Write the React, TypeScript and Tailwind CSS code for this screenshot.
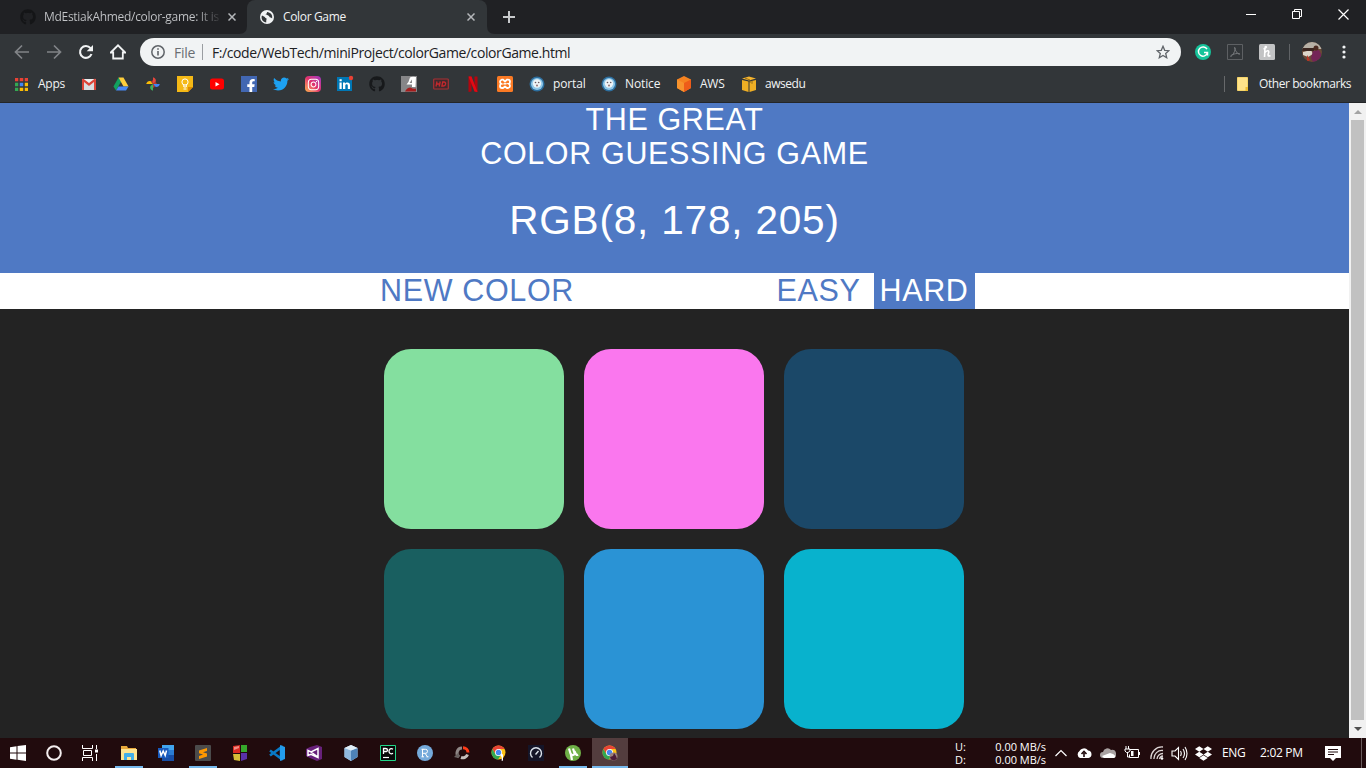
import React from "react";
import { FaGithub, FaTwitter, FaInstagram, FaDropbox, FaFacebookF } from "react-icons/fa";

type P = { children: React.ReactNode; size?: number; vb?: string; className?: string };
const Svg = ({ children, size = 16, vb = "0 0 16 16", className = "" }: P) => (
  <svg width={size} height={size} viewBox={vb} fill="none" className={"shrink-0 " + className}>
    {children}
  </svg>
);

const Close = () => (
  <Svg size={8} vb="0 0 8 8">
    <path d="M0.5 0.5l7 7M7.5 0.5l-7 7" stroke="#b4b7ba" strokeWidth="1.5" />
  </Svg>
);

const Globe = () => (
  <Svg size={14} vb="0 0 14 14">
    <circle cx="7" cy="7" r="7" fill="#f1f3f4" />
    <path d="M2 5.5c1.500 1 2.500 1 3.500 2.500 1.200.2 1.500 1 .8 2L6.200 12.500C3 12 1.300 9.500 1.600 6.500zM7 2c.2 1.500-.9 1.500-1.400 2.500.8.9 2.200.2 3 1.300 1 .9.600 1.700 2 1.600.9.100 1.300.8 1.500 1.100C13 5 10.500 2.300 7 2z" fill="#323639" />
  </Svg>
);

const Chrome = ({ user = false }: { user?: boolean }) => (
  <Svg>
    <circle cx="7.500" cy="7.500" r="7" fill="#fbc116" />
    <path d="M1.400 4A7 7 0 0 1 13.600 4H7.500L4.500 9z" fill="#e84436" />
    <path d="M1.400 4A7 7 0 0 0 7 14.500L10.500 9H4.300z" fill="#31a852" />
    <circle cx="7.500" cy="7.500" r="3.500" fill="#fff" />
    <circle cx="7.500" cy="7.500" r="2.700" fill="#4688f1" />
    {user ? (
      <>
        <circle cx="11.500" cy="11.500" r="4" fill="#98817c" />
        <path d="M8 12l3-1 1-3 2 3 1 3-3 1.500-3-1z" fill="#4b1c39" />
      </>
    ) : (
      <path d="M10 8.500l2 1v6l-1.300.5v-4l-1-1z" fill="#fff" />
    )}
  </Svg>
);

const Seal = () => (
  <Svg>
    <circle cx="8" cy="8" r="7.500" fill="#2d6f9f" />
    <circle cx="8" cy="8" r="6" fill="#8fc7e8" />
    <circle cx="8" cy="7.500" r="4.200" fill="#eef4f7" />
    <circle cx="6.500" cy="6.500" r=".8" fill="#6a5a60" />
    <circle cx="9.700" cy="6.500" r=".8" fill="#6a5a60" />
    <circle cx="8" cy="9.500" r=".9" fill="#8b6464" />
  </Svg>
);

const Gmail = () => (
  <Svg>
    <path d="M1 3h14v11H1z" fill="#eceff1" />
    <path d="M3 14V6l5 4 5-4v8z" fill="#d9dde0" />
    <path d="M1 3.500v10.500h2V6l5 4 5-4v8h2V3.500L14 2.500 8 7 2 2.500z" fill="#dc4438" />
  </Svg>
);
const Drive = () => (
  <Svg>
    <path d="M5.500 1.500L.5 10.500 3 14.500 8 5.800z" fill="#11a15f" />
    <path d="M5.500 1.500h5l5 9h-5z" fill="#fdcd3b" />
    <path d="M5.500 10.500h10L13 14.500H3z" fill="#4687f4" />
  </Svg>
);
const Photos = () => (
  <Svg>
    <path d="M8 8V1.200C10.500 2 11.500 4 10.500 6z" fill="#e8453c" />
    <path d="M8 8h6.800C14 10.500 12 11.500 10 10.500z" fill="#4285f4" />
    <path d="M8 8v6.800C5.500 14 4.500 12 5.500 10z" fill="#3eae5c" />
    <path d="M8 8H1.200C2 5.500 4 4.500 6 5.500z" fill="#fbbc05" />
    <path d="M8 8L6 5.500 8 4zM8 8l2.500-2L12 8zM8 8l2 2.500L8 12z" fill="#bd3a2d" />
  </Svg>
);
const Keep = () => (
  <Svg>
    <path d="M0 0h16v11l-5 5H0z" fill="#f5b916" />
    <path d="M11 16v-5h5z" fill="#e18b00" />
    <circle cx="8" cy="6" r="3.100" stroke="#fff" />
    <path d="M6.800 8.500v2.500h2.500V8.500M6.500 13h3" stroke="#fff" />
  </Svg>
);
const YouTube = () => (
  <Svg>
    <rect x="1" y="2.500" width="14" height="11" rx="2.500" fill="#f00" />
    <path d="M6.500 6v4.500l4-2.250z" fill="#fff" />
  </Svg>
);
const Facebook = () => (
  <span className="relative h-4 w-4 shrink-0 overflow-hidden bg-[#4267b2]">
    <FaFacebookF className="absolute -right-px -bottom-px text-white" size={14} />
  </span>
);
const Insta = () => (
  <span className="flex h-4 w-4 shrink-0 items-center justify-center rounded bg-linear-to-tr from-[#fcb045] via-[#e1306c] to-[#a02fc4]">
    <FaInstagram className="text-white" size={13} />
  </span>
);
const LinkedIn = () => (
  <Svg className="overflow-visible">
    <path d="M0 1h15v14H0z" fill="#0077b5" />
    <path d="M2.500 6.500h2.200V13H2.500zM2.500 3.300h2.200v2H2.500zM6 6.500h2v1c1-1.600 5-1.700 5 1.500v4h-2.200V9.500c0-1.800-2.500-1.600-2.500 0V13H6z" fill="#fff" />
    <circle cx="14" cy="2" r="2.200" fill="#e94235" />
  </Svg>
);
const ALogo = () => (
  <Svg>
    <path d="M0 0h16v16H0z" fill="#868688" />
    <path d="M9 1.500Q10 .5 15 1l-.5 10H11V8.500H5.500Q8 6 9 1.500z" fill="#fff" />
    <path d="M11 3.500L8.500 7H11z" fill="#868688" />
    <path d="M4 15.500Q6 11.500 9.500 11.500q3 2 5.500 1v3z" fill="#a51d1d" />
  </Svg>
);
const HD = () => (
  <Svg>
    <rect x=".7" y="3" width="14.600" height="10" rx=".8" stroke="#a93034" strokeWidth="1.200" fill="#40292c" />
    <path d="M4 5.500L3 10.500M7.200 5.500L6.200 10.500M3.500 8h3M9.700 6L8.900 10h1.500C13 10 13.500 6 11 6z" stroke="#c5282d" strokeWidth="1.300" />
  </Svg>
);
const Netflix = () => (
  <Svg>
    <path d="M3.500.5h3v15l-3 .5zM9.500.5h3V16l-3-.5z" fill="#b1060f" />
    <path d="M3.500.5h3l6 15.500-3-.5z" fill="#e50914" />
  </Svg>
);
const Xampp = () => (
  <Svg>
    <rect width="16" height="16" rx="1.500" fill="#fb7a24" />
    <path d="M5 3.700h1L8 5.500l2-1.800h1q2 0 2 2T11.800 7.800Q13 8.500 13 10t-2 2h-1L8 10.500 6 12H5q-2 0-2-2t1.200-2.200Q3 7 3 5.700t2-2z" stroke="#fff" strokeWidth="1.800" />
    <path d="M6.500 7.800h3" stroke="#fff" strokeWidth="1.500" />
  </Svg>
);
const Aws = () => (
  <Svg>
    <path d="M8 0l7 3.500v8.500L8 16l-7-4V3.500z" fill="#f58220" />
    <path d="M1 3.500L8 7v9l-7-4z" fill="#f7932d" />
    <path d="M8 7l7-3.500v8.500L8 16z" fill="#ee5c19" />
  </Svg>
);
const AwsEdu = () => (
  <Svg>
    <path d="M1 2.500L8 .5l7 2-7 2z" fill="#f7b52d" />
    <path d="M1 4l6.500 1.500V16L1 14zM15 4L8.500 5.500V16L15 14z" fill="#eeae24" />
    <path d="M4 2l5 2v3M11 4.800v3" stroke="#775c1c" strokeWidth=".8" />
  </Svg>
);

const AppsGrid = () => (
  <Svg size={13} vb="0 0 13 13">
    {["#e94235", "#e94235", "#e94235", "#34a853", "#4285f4", "#fbbc05", "#34a853", "#fbbc05", "#fbbc05"].map((c, i) => (
      <rect key={i} x={(i % 3) * 5 - 0.25} y={Math.floor(i / 3) * 5 - 0.25} width="3.500" height="3.500" fill={c} />
    ))}
  </Svg>
);

const marks = [Gmail, Drive, Photos, Keep, YouTube, Facebook];
const marks2 = [ALogo, HD, Netflix, Xampp];

function TabStrip() {
  return (
    <div className="flex h-[34px] bg-[#202124]">
      <div className="flex w-[247px] items-center pl-5">
        <FaGithub size={16} className="shrink-0 text-[#141517]" />
        <span className="ml-2 w-[177px] whitespace-nowrap bg-linear-to-r from-[#c3c5c8] from-86% to-[#2b2c2f] bg-clip-text text-[12px] tracking-[-0.3px] text-transparent">
          MdEstiakAhmed/color-game: It is
        </span>
        <span className="ml-[7px]"><Close /></span>
      </div>
      <div className="relative flex w-[240px] items-center rounded-t-lg bg-[#323639] pl-[13px]">
        <Svg size={8} vb="0 0 8 8" className="absolute bottom-0 -left-2"><path d="M0 8h8V0Q8 8 0 8z" fill="#323639" /></Svg>
        <Svg size={8} vb="0 0 8 8" className="absolute bottom-0 -right-2"><path d="M8 8H0V0Q0 8 8 8z" fill="#323639" /></Svg>
        <Globe />
        <span className="ml-[9px] w-[184px] text-[12px] tracking-[-0.35px] text-[#f1f3f4]">Color Game</span>
        <Close />
      </div>
      <div className="flex flex-1 items-center pl-4">
        <Svg size={12} vb="0 0 12 12"><path d="M6 0v12M0 6h12" stroke="#c8cacc" strokeWidth="2" /></Svg>
      </div>
      <div className="flex items-start gap-[35px] pt-[9px] pr-[17px]">
        <Svg size={11} vb="0 0 11 11"><path d="M0 5.500h10" stroke="#fff" /></Svg>
        <Svg size={11} vb="0 0 11 11"><path d="M.5 2.500h7v7h-7zM2.500 2V.5h7v7H8" stroke="#fff" /></Svg>
        <Svg size={11} vb="0 0 11 11"><path d="M.5 .5l10 10M10.500 .5l-10 10" stroke="#fff" strokeWidth="1.200" /></Svg>
      </div>
    </div>
  );
}

function Toolbar() {
  return (
    <div className="flex h-9 items-center">
      <div className="flex w-[140px] items-center gap-4 pl-[14px]">
        <Svg><path d="M15 8H2M8 1.500L1.500 8 8 14.500" stroke="#818487" strokeWidth="1.700" /></Svg>
        <Svg><path d="M1 8h13M8 1.500L14.500 8 8 14.500" stroke="#818487" strokeWidth="1.700" /></Svg>
        <Svg><path d="M13.500 10a5.900 5.900 0 1 1-1-5.800" stroke="#f1f3f4" strokeWidth="2.100" /><path d="M15 1v6.200H8.700z" fill="#f1f3f4" /></Svg>
        <Svg><path d="M0.800 8.500L8 1.300l7.200 7.200h-2.400v6H3.200v-6z" stroke="#f1f3f4" strokeWidth="1.800" /></Svg>
      </div>
      <div className="flex h-7 w-[1041px] items-center rounded-full bg-[#f1f3f4] pl-[11px] pr-[11px]">
        <Svg size={14} vb="0 0 14 14"><circle cx="7" cy="7" r="6.200" stroke="#5f6368" strokeWidth="1.500" /><path d="M7 6v4.500M7 3.300v1.500" stroke="#5f6368" strokeWidth="1.600" /></Svg>
        <span className="ml-[9px] w-[28px] text-[14px] tracking-[-0.3px] text-[#6a6e73]">File</span>
        <span className="h-4 w-px bg-[#9a9da1]" />
        <span className="ml-[9px] flex-1 whitespace-nowrap text-[14px] tracking-[-0.41px] text-[#202124]">F:/code/WebTech/miniProject/colorGame/colorGame.html</span>
        <Svg size={14} vb="0 0 14 14"><path d="M7 1.300l1.700 4 4.200.4-3.200 2.800 1 4.200L7 10.500l-3.700 2.200 1-4.200L1.100 5.700l4.200-.4z" stroke="#5f6368" strokeWidth="1.300" /></Svg>
      </div>
      <div className="flex flex-1 items-center pl-[14px]">
        <Svg><circle cx="8" cy="8" r="8" fill="#15c39a" /><path d="M12 5.200A4.600 4.600 0 1 0 12.400 9M9 8.500h3.500v3" stroke="#fff" strokeWidth="1.500" /></Svg>
        <Svg className="ml-4"><path d="M.5.5h15v15H.5z" stroke="#5d6063" /><path d="M7.500 3.500C9.500 3 7 10.500 4 12.500c-2 0 2-3.500 8.500-3C14 11.500 9 10 7.500 3.500z" stroke="#76797c" /></Svg>
        <Svg className="ml-4"><rect width="16" height="16" rx="1.500" fill="#c2c3c4" /><path d="M4.500 5C8 4 8 2 6.300 2.800 5.500 5 6 9 5.500 13M5.500 9c3-4 5-2 4 0-.8 2-.7 4 2 2.500" stroke="#fff" strokeWidth="1.600" /></Svg>
        <span className="ml-[14px] h-4 w-px bg-[#606366]" />
        <Svg size={20} vb="0 0 20 20" className="ml-3 rounded-full">
          <path d="M0 0h20v20H0z" fill="#6b4936" />
          <path d="M0 0h20v7H0z" fill="#b7b0a5" /><path d="M1 10l8-2 2 4-5 3-5-2z" fill="#ddd5c9" />
          <path d="M0 6h12v3H0z" fill="#3c2620" /><path d="M11 9l6-1 2 4v6l-3 2h-5l-2-4z" fill="#742557" />
          <circle cx="14" cy="6" r="2.500" fill="#4c2a20" /><path d="M5 13l3 5-3 2z" fill="#b93425" />
        </Svg>
        <Svg size={4} vb="0 0 4 14" className="ml-5 h-[14px]"><circle cx="2" cy="2" r="1.600" fill="#f1f3f4" /><circle cx="2" cy="7" r="1.600" fill="#f1f3f4" /><circle cx="2" cy="12" r="1.600" fill="#f1f3f4" /></Svg>
      </div>
    </div>
  );
}

function Bookmarks() {
  return (
    <div className="flex h-[33px] items-center border-b border-[#242628] pb-1 text-[12px] tracking-[-0.25px] text-[#f1f3f4]">
      <span className="flex w-[81px] items-center gap-[10px] pl-[15px]"><AppsGrid />Apps</span>
      <span className="flex items-center gap-4">
        {marks.map((M, i) => <M key={i} />)}
        <FaTwitter size={16} className="text-[#1da1f2]" />
        <Insta />
        <LinkedIn />
        <FaGithub size={16} className="text-[#17191b]" />
        {marks2.map((M, i) => <M key={i} />)}
      </span>
      <span className="ml-4 flex w-[72px] items-center gap-2 tracking-[-0.12px]"><Seal />portal</span>
      <span className="flex w-[75px] items-center gap-2 tracking-[-0.12px]"><Seal />Notice</span>
      <span className="flex w-[65px] items-center gap-2"><Aws />AWS</span>
      <span className="flex items-center gap-2 tracking-[-0.45px]"><AwsEdu />awsedu</span>
      <span className="ml-auto h-4 w-px bg-[#67696b]" />
      <span className="flex w-[141px] items-center gap-2 pl-[11px]">
        <Svg><path d="M1.500 1.500h10v13h-10z" fill="#ffe38a" stroke="#f5d56b" /><path d="M9.500 11h2.500v4H9.500z" fill="#edbd32" /></Svg>
        <span className="-ml-px whitespace-nowrap tracking-[-0.43px]">Other bookmarks</span>
      </span>
    </div>
  );
}

function Game() {
  return (
    <main className="w-[1349px] bg-[#232323] font-['Liberation_Sans',Arial,sans-serif]">
      <header className="flex h-[170px] flex-col items-center bg-[#4f79c4] text-white">
        <h1 className="-mt-px text-center text-[30.5px] leading-[34px] tracking-[0.65px]">THE GREAT<br />COLOR GUESSING GAME</h1>
        <div className="mt-[26px] text-[40.5px] leading-[48px] tracking-[0.82px]">RGB(8, 178, 205)</div>
      </header>
      <nav className="flex h-9 bg-white pl-[374px] text-[30.5px] leading-[34px] tracking-[0.65px] text-[#4f79c4]">
        <button className="flex w-[397px] pl-[6px]">NEW COLOR</button>
        <button className="flex w-[103px] pl-[5.5px]">EASY</button>
        <button className="flex w-[101px] bg-[#4f79c4] pl-[5.5px] text-white">HARD</button>
      </nav>
      <section className="grid h-[429px] grid-cols-[180px_180px_180px] grid-rows-[180px_180px] gap-5 pt-10 pl-[384px]">
        <div className="rounded-[27px] bg-[#84df9f]" />
        <div className="rounded-[27px] bg-[#fa77ee]" />
        <div className="rounded-[27px] bg-[#1b4868]" />
        <div className="rounded-[27px] bg-[#195f60]" />
        <div className="rounded-[27px] bg-[#2a93d5]" />
        <div className="rounded-[27px] bg-[#08b2cd]" />
      </section>
    </main>
  );
}

function ScrollBar() {
  return (
    <div className="flex w-[17px] flex-col items-center justify-between bg-[#f1f1f1]">
      <div className="flex h-[17px] items-center"><Svg size={8} vb="0 0 8 4" className="h-1"><path d="M0 4l4-4 4 4z" fill="#a3a3a3" /></Svg></div>
      <div className="w-[13px] flex-1 bg-[#c1c1c1]" />
      <div className="flex h-[18px] items-center"><Svg size={8} vb="0 0 8 4" className="h-1"><path d="M0 0l4 4 4-4z" fill="#505050" /></Svg></div>
    </div>
  );
}

const Explorer = () => (
  <Svg><path d="M0 1h6l1 2h8v3H0z" fill="#e9a93b" /><path d="M0 4h16v11H0z" fill="#ffe391" /><path d="M3 15V9q0-1 1-1h8q1 0 1 1v6h-3v-3H6v3z" fill="#43aee8" /></Svg>
);
const Word = () => (
  <Svg><path d="M4 0h12v5H4z" fill="#41a5ee" /><path d="M4 5h12v5H4z" fill="#2b7cd3" /><path d="M4 10h12v6H4z" fill="#174ea6" /><path d="M0 3h10.500v10H0z" fill="#185abd" /><path d="M1.800 5.500l1.300 5L5.200 6l2 4.500 1.300-5" stroke="#fff" strokeWidth="1.500" /></Svg>
);
const Sublime = () => (
  <Svg><rect width="16" height="16" rx="1" fill="#4b4b4b" /><path d="M4 5.500L12 3v3L8 7.300l4 1.200v3L4 14v-3l4-1.400-4-1.300z" fill="#ff9800" /></Svg>
);
const Blocks = () => (
  <Svg><path d="M1 1l7-1v8H1z" fill="#d92a22" /><path d="M9 0h6v7H9z" fill="#36a82b" /><path d="M1 9h7v7l-6-1z" fill="#d5bd37" /><path d="M9 8h6v6l-6 2z" fill="#5931a8" /><path d="M2 2l5-1v2L2 5z" fill="#f28a82" /></Svg>
);
const Code = () => (
  <Svg><path d="M1 5.500l11 8V2.500L1 10.500" stroke="#0879c6" strokeWidth="2.600" /><path d="M11 0l5 2v12l-5 2z" fill="#239cec" /></Svg>
);
const VS = () => (
  <Svg><path d="M0 4l4-2 7-2 5 2v12l-5 2-7-3-4-2z" fill="#67217a" /><path d="M2 5.500v5l3-1.200 7 3.200v-9L5 7zM5 7l7 5" stroke="#fff" strokeWidth="1.500" /></Svg>
);
const Cube = () => (
  <Svg><path d="M8 0l6.500 3v9L8 16l-6.500-4V3z" fill="#b8d6ed" /><path d="M1.500 3L8 5.500V16l-6.500-4z" fill="#90b9df" /><path d="M8 5.500L14.500 3v9L8 16z" fill="#4e82b8" /><path d="M8 0l6.500 3L8 5.500 1.500 3z" fill="#e0edf6" /></Svg>
);
const PyCharm = () => (
  <Svg><path d="M.5.5h15v15H.5z" fill="#080808" stroke="#21d789" /><path d="M3.500 9V3.500h2q2 0 2 1.500t-2 1.500h-2M13 4.200c-2-1.500-4 0-4 2s2 3.500 4 2" stroke="#fff" strokeWidth="1.300" /><path d="M3 12.500h6" stroke="#fff" strokeWidth="1.200" /></Svg>
);
const RStudio = () => (
  <Svg><circle cx="8" cy="8" r="8" fill="#75aadb" /><path d="M5.500 11.800V4.300h3q2 0 2 2t-2 2h-3M8 8.300l2.500 3.500M4.500 4.300h2M4.500 11.800h2.500M9.500 11.800h2" stroke="#fff" /></Svg>
);
const Ring = () => (
  <Svg><path d="M5 12A5 5 0 0 1 8 3" stroke="#8f8785" strokeWidth="3" /><path d="M9 2.800A5 5 0 0 1 14 7.500" stroke="#ff3b18" strokeWidth="3" /><path d="M13.500 9.500A5 5 0 0 1 7 12.500" stroke="#c6c0bd" strokeWidth="3" /><path d="M0 12l4-4 2 3-2 2z" fill="#6a6260" /></Svg>
);
const Gauge = () => (
  <Svg><path d="M0 0h16v16H0z" fill="#141528" /><path d="M4.500 12.500A5.500 5.500 0 1 1 11.500 12.500M7.500 9.500L10.500 6" stroke="#dce2ea" strokeWidth="1.400" /></Svg>
);
const Torrent = () => (
  <Svg><circle cx="8" cy="8" r="8" fill="#6fb047" /><path d="M4 3.500l1.500 5q1 2.500 3.500 1 1-.7 0-3L8 3.500M9.500 6q1.500 5 3.500 3.500M6 10l1 5" stroke="#fff" strokeWidth="2.200" /></Svg>
);

const tasks: { icon: React.ReactNode; open?: boolean; active?: boolean }[] = [
  { icon: <Explorer />, open: true }, { icon: <Word /> }, { icon: <Sublime />, open: true }, { icon: <Blocks /> },
  { icon: <Code /> }, { icon: <VS /> }, { icon: <Cube /> }, { icon: <PyCharm /> }, { icon: <RStudio /> }, { icon: <Ring /> },
  { icon: <Chrome /> }, { icon: <Gauge /> }, { icon: <Torrent />, open: true }, { icon: <Chrome user />, active: true },
];

function Taskbar() {
  return (
    <footer className="flex h-[30px] bg-[#210b0d] text-white">
      <div className="flex w-[110px] items-center gap-5 pl-[10px]">
        <Svg><path d="M0 2.300L6.500 1.300v6.200H0zM7.500 1.100L16 0v7.500H7.500zM0 8.500h6.500v6.200L0 13.700zM7.500 8.500H16V16l-8.500-1.200z" fill="#fff" /></Svg>
        <Svg><circle cx="8" cy="8" r="6.800" stroke="#f4eeee" strokeWidth="2" /></Svg>
        <Svg><path d="M.5 0v3.500h10V0M.5 16v-3.500h10V16M1.500 5.500h8v5h-8zM14.500 0v4M14.500 9v7" stroke="#fff" /><path d="M13 4.500h3v3h-3z" fill="#fff" /></Svg>
      </div>
      <div className="flex">
        {tasks.map((t, i) => (
          <div key={i} className="flex w-[37px] justify-center">
            <div className={t.active ? "flex w-9 flex-col items-center bg-[#533d3e]" : "flex w-7 flex-col items-center"}>
              <span className="flex flex-1 items-center">{t.icon}</span>
              <span className={t.open || t.active ? "-mt-0.5 h-0.5 w-full bg-[#76b9ed]" : "h-0"} />
            </div>
          </div>
        ))}
      </div>
      <div className="ml-auto flex items-center">
        <div className="mr-[9px] grid w-[91px] grid-cols-[auto_auto] justify-between text-[11px] leading-[13px] tracking-[-0.02px]">
          <span>U:</span><span>0.00 MB/s</span><span>D:</span><span>0.00 MB/s</span>
        </div>
        <Svg size={12} vb="0 0 12 12"><path d="M.5 9L6 3.500 11.500 9" stroke="#fff" strokeWidth="1.200" /></Svg>
        <Svg className="ml-[9px]"><path d="M4 13a4 4 0 0 1-.5-7A5 5 0 0 1 12 5.500 3.800 3.800 0 0 1 12.500 13z" fill="#fff" /><path d="M8 12V8M5.500 9L8 6.500 10.500 9" stroke="#210b0d" strokeWidth="1.600" /></Svg>
        <Svg className="ml-2"><path d="M3 13a3 3 0 0 1 0-6A4.500 4.500 0 0 1 11 5a4 4 0 0 1 2 8z" fill="#a9a2a2" /><path d="M4 13l-2-2 8-3q5 1 5.500 4l-1.500 1z" fill="#fff" /></Svg>
        <Svg className="ml-2"><path d="M5.500 4.500h9v8h-9v-3M15.500 7v3M2 1v3M4.500 1v3M1 4h5v2L4 7.500H2.500L1 6zM3.500 7.500V12h2" stroke="#fff" /><path d="M7 6h2.500v5H7z" fill="#fff" /></Svg>
        <Svg className="ml-[10px]"><path d="M1 14A11 11 0 0 1 13 2M4 14A8 8 0 0 1 13 5.500M7 14A6 6 0 0 1 13 8.500M9.500 14a4 4 0 0 1 3.500-3" stroke="#ddd5d5" strokeWidth="1.300" /><circle cx="12" cy="13.500" r="1.300" fill="#fff" /></Svg>
        <Svg size={17} vb="0 0 17 16" className="ml-[5px]"><path d="M1 5.500h3L7.500 2v12L4 10.500H1zM9.500 5.500q1.500 2.500 0 5M12 3.500q3 4.500 0 9M14 1.500q4 6.500 0 13" stroke="#fff" strokeWidth="1.100" /></Svg>
        <FaDropbox size={17} className="ml-[7px]" />
        <span className="ml-[10px] w-[38px] text-[12px] tracking-[-0.3px]">ENG</span>
        <span className="w-[65px] text-[12px] tracking-[-0.3px]">2:02 PM</span>
        <Svg><path d="M0 1h16v12h-5l-3 3-3-3H0z" fill="#fff" /><path d="M3 4.500h10M3 7h10M3 9.500h6" stroke="#210b0d" /></Svg>
        <span className="ml-5 h-[30px] w-px bg-[#695b5c]" />
        <span className="w-1" />
      </div>
    </footer>
  );
}

export default function App() {
  return (
    <div className="flex h-[768px] w-[1366px] flex-col overflow-hidden bg-[#323639] font-['Open_Sans','Noto_Sans',sans-serif]">
      <TabStrip />
      <Toolbar />
      <Bookmarks />
      <div className="flex h-[635px]">
        <Game />
        <ScrollBar />
      </div>
      <Taskbar />
    </div>
  );
}
